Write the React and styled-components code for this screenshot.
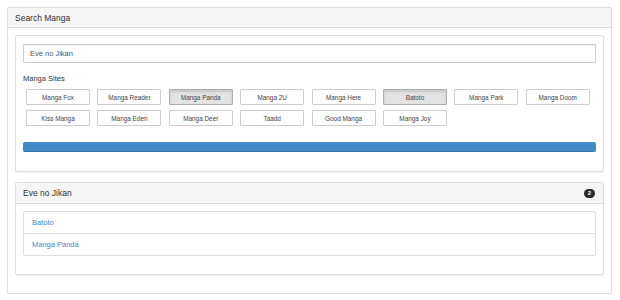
import React from 'react'
import styled, { createGlobalStyle } from 'styled-components'

const GlobalStyle = createGlobalStyle`
  body {
    margin: 0;
    background: #fff;
    font-family: "Liberation Sans", Arial, sans-serif;
    color: #333;
  }
`

const Page = styled.div`
  padding: 7px 8px 0 7px;
`

const Panel = styled.div`
  background: #fff;
  border: 1px solid #ddd;
  border-radius: 2px;
  box-shadow: 0 1px 1px rgba(0, 0, 0, 0.05);
`

const PanelHeading = styled.div`
  display: flex;
  align-items: center;
  justify-content: space-between;
  height: ${(p) => p.h || 19}px;
  padding: 0 8px 0 7px;
  background: #f5f5f5;
  border-bottom: 1px solid #ddd;
  border-radius: 2px 2px 0 0;
  font-size: 8.5px;
  color: #333;
`

const OuterBody = styled.div`
  display: flex;
  flex-direction: column;
  gap: 10px;
  padding: 7px 7px 18px;
`

const SearchBody = styled.div`
  padding: 8px 7px 19px;
`

const ResultBody = styled.div`
  padding: 7px 7px 18px;
`

const Input = styled.input`
  display: block;
  box-sizing: border-box;
  width: 100%;
  height: 19px;
  margin: 0 0 11px;
  padding: 0 6px;
  border: 1px solid #ccc;
  border-radius: 1px;
  box-shadow: inset 0 1px 1px rgba(0, 0, 0, 0.075);
  font-family: inherit;
  font-size: 7.5px;
  color: #555;
  outline: none;
`

const Label = styled.div`
  height: 10px;
  line-height: 10px;
  margin-bottom: 5px;
  font-size: 7.5px;
  color: #333;
`

const Sites = styled.div`
  display: grid;
  grid-template-columns: repeat(8, 64px);
  column-gap: 7.4px;
  row-gap: 5px;
  padding-left: 3px;
  margin-bottom: 16px;
`

const SiteButton = styled.div`
  box-sizing: border-box;
  height: 16px;
  display: flex;
  align-items: center;
  justify-content: center;
  font-size: 6.4px;
  color: #444;
  background: ${(p) => (p.active ? '#e3e3e3' : '#fff')};
  border: 1px solid ${(p) => (p.active ? '#adadad' : '#ccc')};
  border-radius: 1px;
  box-shadow: ${(p) => (p.active ? 'inset 0 2px 3px rgba(0,0,0,0.125)' : 'none')};
`

const Progress = styled.div`
  height: 10px;
  background: #f5f5f5;
  border-radius: 2px;
  overflow: hidden;
`

const Bar = styled.div`
  height: 100%;
  background: #428bca;
  box-shadow: inset 0 -1px 0 rgba(0, 0, 0, 0.15);
`

const Badge = styled.span`
  display: inline-flex;
  align-items: center;
  justify-content: center;
  min-width: 11px;
  height: 9px;
  border-radius: 5px;
  background: #2b2b2b;
  color: #fff;
  font-size: 6px;
  font-weight: bold;
`

const ListGroup = styled.div`
  border: 1px solid #ddd;
  border-radius: 2px;
`

const ListItem = styled.a`
  display: flex;
  align-items: center;
  height: 21px;
  padding: 0 8px;
  font-size: 7.5px;
  color: #428bca;
  text-decoration: none;
  & + & {
    border-top: 1px solid #ddd;
  }
`

const sites = [
  'Manga Fox', 'Manga Reader', 'Manga Panda', 'Manga 2U', 'Manga Here', 'Batoto',
  'Manga Park', 'Manga Doom', 'Kiss Manga', 'Manga Eden', 'Manga Deer', 'Taadd',
  'Good Manga', 'Manga Joy',
]
const selected = ['Manga Panda', 'Batoto']

export default function App() {
  return (
    <Page>
      <GlobalStyle />
      <Panel>
        <PanelHeading>Search Manga</PanelHeading>
        <OuterBody>
          <Panel>
            <SearchBody>
              <Input defaultValue="Eve no Jikan" />
              <Label>Manga Sites</Label>
              <Sites>
                {sites.map((s) => (
                  <SiteButton key={s} active={selected.includes(s)}>{s}</SiteButton>
                ))}
              </Sites>
              <Progress>
                <Bar style={{ width: '100%' }} />
              </Progress>
            </SearchBody>
          </Panel>
          <Panel>
            <PanelHeading h={20}>
              Eve no Jikan
              <Badge>{selected.length}</Badge>
            </PanelHeading>
            <ResultBody>
              <ListGroup>
                <ListItem href="#">Batoto</ListItem>
                <ListItem href="#">Manga Panda</ListItem>
              </ListGroup>
            </ResultBody>
          </Panel>
        </OuterBody>
      </Panel>
    </Page>
  )
}
